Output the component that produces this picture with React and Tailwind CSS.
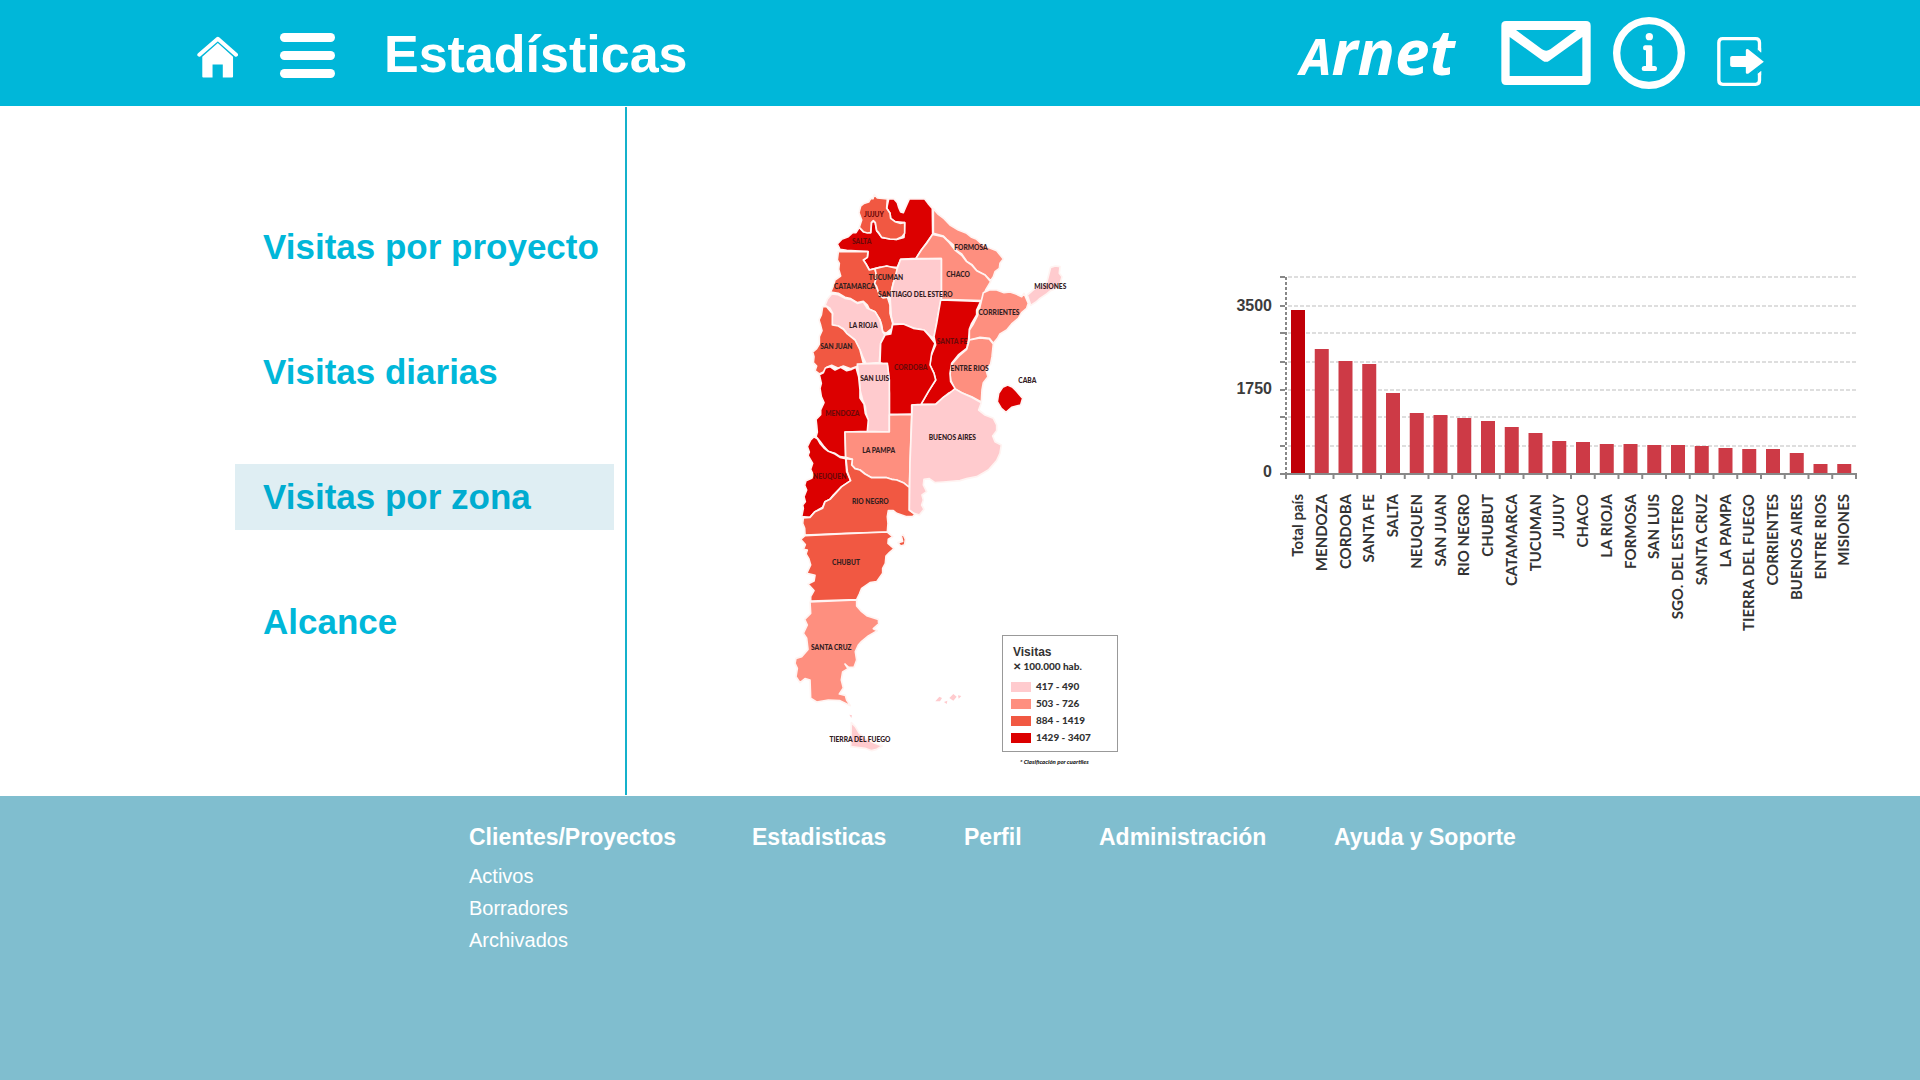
import React from "react";

const SHADES = {
  pale: "#ffcbce",
  salmon: "#fe8f7f",
  orange: "#f15842",
  red: "#dc0000",
};

const PROVINCES = [
  { name: "Salta", shade: "red", d: "M238 142L250 155 272 158 275 125 285 125 290 152 305 172 330 177 350 178 372 172 374 128 345 125 332 115 330 100 320 85 326 57 342 57 352 68 356 82 362 96 370 98 376 84 388 57 434 57 444 70 457 85 458 163 440 188 424 210 408 235 362 238 352 262 330 262 320 258 308 264 300 262 285 266 268 270 258 252 250 240 262 232 264 215 200 211 180 208 172 192 185 178 205 170 218 158 228 158Z" },
  { name: "Jujuy", shade: "orange", d: "M238 142L245 120 237 98 242 78 252 70 266 66 272 56 279 56 283 44 292 54 322 57 320 85 330 100 332 115 345 125 360 130 374 128 374 160 366 170 350 178 330 177 305 172 296 158 290 152 286 128 280 122 274 128 272 158 262 159 250 155Z" },
  { name: "Formosa", shade: "salmon", d: "M460 86L475 103 492 116 510 135 535 150 560 160 575 172 590 178 605 192 620 200 650 212 670 237 660 250 658 265 645 275 640 290 632 302 615 285 590 272 576 254 560 244 545 222 530 212 520 195 500 178 490 168 460 160Z" },
  { name: "Chaco", shade: "salmon", d: "M458 163L490 170 508 188 525 210 545 226 560 245 576 256 590 272 615 285 632 305 618 328 605 362 484 358 484 236 408 235 424 210 440 190Z" },
  { name: "Catamarca", shade: "orange", d: "M175 215L264 215 262 232 250 240 258 252 268 270 285 266 290 290 285 310 300 345 322 350 330 375 330 400 338 430 336 445 318 460 308 455 305 435 300 420 285 395 268 388 262 375 250 364 232 368 212 356 195 352 175 340 152 336 160 318 165 300 182 288 176 268 178 250 172 240Z" },
  { name: "Tucuman", shade: "orange", d: "M285 266L300 262 320 258 352 265 350 290 340 308 336 325 332 350 310 354 298 345 290 320 284 310 290 290Z" },
  { name: "Santiago del Estero", shade: "pale", d: "M362 238L484 236 484 358 475 400 462 474 450 468 432 450 400 444 370 432 340 432 334 410 332 380 330 350 340 310 352 265Z" },
  { name: "La Rioja", shade: "pale", d: "M155 342L175 344 195 355 212 358 232 370 250 366 262 385 285 395 300 420 308 455 315 465 302 490 298 548 258 551 248 530 240 510 225 480 200 460 190 446 175 438 157 435 156 415 158 400 150 385 135 376 142 358Z" },
  { name: "San Juan", shade: "orange", d: "M128 380L140 380 148 390 157 400 157 435 175 438 190 448 200 460 225 480 240 510 250 550 228 560 212 566 190 558 175 565 155 556 140 562 132 575 118 582 105 572 110 558 100 548 102 530 98 516 110 506 118 492 118 470 126 452 122 436 117 420 124 405Z" },
  { name: "Misiones", shade: "pale", d: "M812 262L826 258 840 260 838 280 846 290 842 306 830 325 812 332 800 342 780 355 768 366 752 376 742 345 765 325 782 318 800 308 806 285Z" },
  { name: "Corrientes", shade: "salmon", d: "M610 338L628 330 650 330 672 338 690 336 708 342 725 350 732 340 745 370 740 385 725 398 715 415 695 432 680 450 660 462 652 476 640 490 628 475 600 472 568 480 568 450 580 432 592 408 600 380Z" },
  { name: "Entre Rios", shade: "salmon", d: "M568 480L600 474 628 477 640 492 636 530 632 552 618 570 624 590 610 608 606 630 604 666 575 650 545 638 525 628 512 600 510 580 516 552 540 525 560 508Z" },
  { name: "Santa Fe", shade: "red", d: "M482 360L602 364 590 390 590 405 575 430 568 448 566 478 560 505 535 525 515 550 510 580 512 605 525 625 520 634 508 638 490 652 467 673 423 673 445 635 467 600 462 580 450 555 452 530 467 495 462 470 470 430 475 400Z" },
  { name: "Cordoba", shade: "red", d: "M338 434L370 432 400 445 432 450 450 470 465 490 455 520 450 555 462 580 467 600 445 635 423 673 395 675 395 703 328 703 328 640 325 580 322 556 300 548 302 490 315 465 332 462Z" },
  { name: "San Luis", shade: "pale", d: "M232 552L322 550 328 600 328 756 260 754 264 720 258 700 256 680 248 660 240 630 238 600Z" },
  { name: "Mendoza", shade: "red", d: "M118 584L130 578 136 564 150 560 165 570 182 562 200 572 215 568 228 562 236 590 240 630 240 654 252 672 256 700 265 720 262 754 195 756 197 832 180 830 165 820 145 815 132 800 120 784 108 770 112 756 110 735 108 718 122 704 122 690 132 668 124 650 120 625 124 610Z" },
  { name: "Neuquen", shade: "red", d: "M102 770L112 776 120 790 132 804 145 814 165 822 180 832 197 836 200 875 212 902 185 920 160 945 150 958 135 965 128 982 105 995 90 1012 65 1010 70 985 68 975 76 965 72 950 80 930 74 916 78 902 95 895 100 885 92 868 98 850 84 826 88 816 82 800 92 780Z" },
  { name: "La Pampa", shade: "salmon", d: "M195 756L328 756 328 705 395 703 388 922 370 908 350 900 335 898 320 893 275 893 255 882 240 870 225 866 215 855 217 838 197 832Z" },
  { name: "Rio Negro", shade: "orange", d: "M198 836L217 838 215 855 225 866 240 870 255 882 275 893 320 893 335 898 350 900 370 908 388 922 388 990 405 1003 398 1010 380 1010 350 1000 340 992 325 992 322 1010 324 1030 322 1056 200 1060 75 1065 74 1045 68 1030 70 1014 90 1012 105 995 128 985 135 965 150 958 185 920 212 902 202 875Z" },
  { name: "Chubut", shade: "orange", d: "M62 1078L75 1067 200 1061 322 1056 338 1070 325 1078 324 1090 342 1106 328 1118 318 1128 316 1150 308 1165 308 1180 290 1205 270 1208 245 1225 238 1242 230 1259 92 1263 92 1250 102 1232 84 1212 102 1203 105 1186 80 1180 92 1155 86 1135 78 1122 82 1110 70 1108 76 1094Z" },
  { name: "Península Valdés", shade: "orange", d: "M370 1064L376 1078 374 1094 362 1098 354 1088 368 1084 364 1068Z" },
  { name: "Santa Cruz", shade: "salmon", d: "M90 1266L230 1260 230 1278 245 1295 262 1308 295 1318 296 1332 280 1346 292 1352 265 1368 245 1384 235 1395 226 1415 230 1440 222 1462 206 1462 195 1452 204 1466 188 1476 184 1500 190 1524 178 1542 196 1546 200 1560 211 1577 180 1562 145 1560 110 1566 92 1555 90 1500 75 1496 60 1508 48 1490 52 1465 45 1450 48 1435 65 1430 84 1408 80 1375 70 1360 82 1335 74 1318 92 1300Z" },
  { name: "Tierra del Fuego", shade: "pale", d: "M214 1628L226 1640 238 1660 260 1678 285 1690 307 1698 290 1708 275 1712 255 1705 212 1700Z" },
  { name: "Buenos Aires", shade: "pale", d: "M397 675L467 673 490 652 508 640 525 626 545 638 575 652 604 668 596 690 615 705 640 715 650 735 650 752 638 768 645 785 664 795 660 820 650 842 625 870 590 890 560 896 540 902 490 906 465 908 448 896 432 898 430 915 440 935 426 945 430 960 425 975 432 988 418 1005 402 1000 388 990 390 850Z" },
  { name: "CABA", shade: "red", d: "M683 615L698 622 708 632 728 655 722 675 695 682 678 697 664 685 652 665 656 640 668 622Z" },
  { name: "Malvinas", shade: "pale", d: "M466 1564L478 1550 486 1554 480 1564ZM492 1566L502 1562 500 1572ZM508 1554L520 1542 530 1550 520 1562ZM534 1546L544 1548 536 1556ZM208 1604L216 1606 214 1614Z" },
];

const MAP_LABELS = [
  ["JUJUY", 282, 112, true],
  ["SALTA", 245, 193, true],
  ["FORMOSA", 573, 210],
  ["TUCUMAN", 318, 299],
  ["CHACO", 534, 292],
  ["CATAMARCA", 224, 327],
  ["SANTIAGO DEL ESTERO", 406, 350],
  ["MISIONES", 811, 327],
  ["CORRIENTES", 657, 404],
  ["LA RIOJA", 250, 445],
  ["SANTA FE", 516, 491, true],
  ["SAN JUAN", 169, 506],
  ["CORDOBA", 392, 569, true],
  ["ENTRE RIOS", 569, 573],
  ["SAN LUIS", 284, 602],
  ["CABA", 742, 609],
  ["MENDOZA", 187, 707, true],
  ["BUENOS AIRES", 517, 781],
  ["LA PAMPA", 296, 819],
  ["NEUQUEN", 149, 898, true],
  ["RIO NEGRO", 271, 971],
  ["CHUBUT", 198, 1156],
  ["SANTA CRUZ", 154, 1410],
  ["TIERRA DEL FUEGO", 240, 1687],
];

const LEGEND = [
  { range: "417 - 490", color: "bg-[#ffcbce]" },
  { range: "503 - 726", color: "bg-[#fe8f7f]" },
  { range: "884 - 1419", color: "bg-[#f15842]" },
  { range: "1429 - 3407", color: "bg-[#dc0000]" },
];

const BARS = [
  ["Total país", 163],
  ["MENDOZA", 124],
  ["CORDOBA", 112],
  ["SANTA FE", 109],
  ["SALTA", 80],
  ["NEUQUEN", 60],
  ["SAN JUAN", 58],
  ["RIO NEGRO", 55],
  ["CHUBUT", 52],
  ["CATAMARCA", 46],
  ["TUCUMAN", 40],
  ["JUJUY", 32],
  ["CHACO", 31],
  ["LA RIOJA", 29],
  ["FORMOSA", 29],
  ["SAN LUIS", 28],
  ["SGO. DEL ESTERO", 28],
  ["SANTA CRUZ", 27],
  ["LA PAMPA", 25],
  ["TIERRA DEL FUEGO", 24],
  ["CORRIENTES", 24],
  ["BUENOS AIRES", 20],
  ["ENTRE RIOS", 9],
  ["MISIONES", 9],
];

const GRID_LINES = [7, 36, 63, 92, 120, 147, 176];

const NAV = ["Visitas por proyecto", "Visitas diarias", "Visitas por zona", "Alcance"];

function HomeIcon() {
  return (
    <svg viewBox="50 106 124 126" className="h-[42px] w-[41px]" aria-hidden="true">
      <path d="M57 162L113 114 168 162" fill="none" stroke="#fff" strokeWidth="12" strokeLinecap="round" strokeLinejoin="round" />
      <path d="M66 168L113 127 159 168V228Q159 231 156 231H128V192H97V231H69Q66 231 66 228Z" fill="#fff" />
    </svg>
  );
}

function MenuIcon() {
  return (
    <span className="flex w-[55px] flex-col gap-[9px]">
      <span className="h-[9px] rounded-full bg-white" />
      <span className="h-[9px] rounded-full bg-white" />
      <span className="h-[9px] rounded-full bg-white" />
    </span>
  );
}

function MailIcon() {
  return (
    <svg viewBox="664 66 268 192" className="h-16 w-[90px]" aria-hidden="true">
      <path
        fill="#fff"
        fillRule="evenodd"
        d="M678 66H918Q932 66 932 80V244Q932 258 918 258H678Q664 258 664 244V80Q664 66 678 66ZM708 93L786 151Q798 159 811 151L889 93ZM689 114V231H907V114L808 185Q798 192 788 185Z"
      />
    </svg>
  );
}

function InfoIcon() {
  return (
    <svg viewBox="999 54 216 216" className="h-[72px] w-[72px]" aria-hidden="true">
      <circle cx="1107" cy="162" r="97" fill="none" stroke="#fff" strokeWidth="22" />
      <circle cx="1108" cy="113" r="11" fill="#fff" />
      <path fill="#fff" d="M1095 139H1112Q1117 139 1117 144V201H1124Q1131 201 1131 209T1124 216H1092Q1085 216 1085 209T1092 201H1098V154H1095Q1089 154 1089 147T1095 139Z" />
    </svg>
  );
}

function ExitIcon() {
  return (
    <svg viewBox="1311 111 140 147" className="h-[49px] w-[47px]" aria-hidden="true">
      <path fill="none" stroke="#fff" strokeWidth="10" d="M1438 157V128Q1438 116 1426 116H1328Q1316 116 1316 128V241Q1316 253 1328 253H1426Q1438 253 1438 241V213" />
      <path fill="#00b7d9" d="M1432 146L1451 163V207L1432 223Z" />
      <path fill="#fff" d="M1433 149L1443 158V145H1433ZM1433 221L1443 213V226H1433Z" />
      <path fill="#fff" d="M1356 168H1397V150Q1399 145 1404 148L1451 185 1404 221Q1399 223 1397 218V201H1356Q1350 201 1350 196V173Q1350 168 1356 168Z" />
    </svg>
  );
}

function Header() {
  return (
    <header className="flex h-[106px] items-center bg-[#00b7d9] pr-[156px] pl-[197px]">
      <a href="#inicio" aria-label="Inicio" className="pt-2">
        <HomeIcon />
      </a>
      <button type="button" aria-label="Menú" className="ml-[42px] pt-1">
        <MenuIcon />
      </button>
      <h1 className="ml-[49px] pt-0.5 text-[52px] leading-none font-bold text-white">Estadísticas</h1>
      <div className="ml-auto flex items-center self-stretch">
        <a href="#arnet" className="flex items-baseline pr-[46px] pb-1 font-['Open_Sans',sans-serif] font-bold text-white italic">
          <span className="text-[50px] leading-none">A</span>
          <span className="text-[62px] leading-none">rnet</span>
        </a>
        <button type="button" aria-label="Mensajes">
          <MailIcon />
        </button>
        <button type="button" aria-label="Información" className="ml-[22px]">
          <InfoIcon />
        </button>
        <button type="button" aria-label="Salir" className="mb-5 ml-8 self-end">
          <ExitIcon />
        </button>
      </div>
    </header>
  );
}

function ArgentinaMap() {
  return (
    <figure className="grid w-[340px] shrink-0 font-['Lato',sans-serif]">
      <svg viewBox="0 0 1020 1770" className="col-start-1 row-start-1 w-full" role="img" aria-label="Mapa de visitas por provincia">
        {PROVINCES.map((p) => (
          <path key={p.name} d={p.d} fill={SHADES[p.shade]} stroke={p.name === "Malvinas" ? "none" : "#fff4f2"} strokeWidth="5" strokeLinejoin="round" />
        ))}
        {MAP_LABELS.map(([name, x, y, dark]) => (
          <text key={name} x={x} y={y} textAnchor="middle" fontSize="20" fontWeight="900" fill={dark ? "#6b0808" : "#33201f"}>
            {name}
          </text>
        ))}
      </svg>
      <figcaption className="col-start-1 row-start-1 flex flex-col self-end justify-self-end pr-0.5">
        <div className="flex h-[117px] w-[116px] flex-col border border-[#999] pt-2 pl-2 text-[10px] font-black text-[#333]">
          <p className="pl-0.5 font-['Liberation_Sans',sans-serif] text-xs leading-4 font-bold">Visitas</p>
          <p className="pl-0.5 leading-3">✕ 100.000 hab.</p>
          <ul className="pt-1.5">
            {LEGEND.map((row) => (
              <li key={row.range} className="flex h-[17px] items-center gap-[5px]">
                <span className={`h-2.5 w-5 ${row.color}`} />
                {row.range}
              </li>
            ))}
          </ul>
        </div>
        <p className="h-[18px] pt-1 pl-[18px] text-[6px] leading-3 font-black text-[#222] italic">* Clasificación por cuartiles</p>
      </figcaption>
    </figure>
  );
}

function BarChart() {
  return (
    <svg viewBox="0 0 630 370" className="w-full" role="img" aria-label="Visitas por provincia">
      {GRID_LINES.map((y) => (
        <g key={y}>
          <line x1="58" x2="626" y1={y} y2={y} stroke="#dedede" strokeWidth="2" strokeDasharray="4 2" />
          <line x1="50" x2="55" y1={y} y2={y} stroke="#888" strokeWidth="2" />
        </g>
      ))}
      <line x1="56" x2="56" y1="7" y2="204" stroke="#888" strokeWidth="2" strokeDasharray="3 2" />
      <g fontSize="16" fontWeight="700" fill="#3c3c3c" textAnchor="end">
        <text x="42" y="41">3500</text>
        <text x="42" y="124">1750</text>
        <text x="42" y="207">0</text>
      </g>
      {BARS.map(([name, height], i) => {
        const left = 56 + (i * 570) / 24;
        return (
          <g key={name}>
            <rect x={left + 5} y={203 - height} width="14" height={height} fill={i === 0 ? "#c00008" : "#cd3a46"} />
            <line x1={left} x2={left} y1="203" y2="209" stroke="#888" strokeWidth="2" />
            <text
              transform={`translate(${left + 17} 224) rotate(-90)`}
              textAnchor="end"
              fontSize="15"
              fontWeight="700"
              fill="#333"
              className="font-['Lato',sans-serif]"
            >
              {name}
            </text>
          </g>
        );
      })}
      <path d="M50 204H626V209" fill="none" stroke="#888" strokeWidth="2" />
    </svg>
  );
}

function Footer() {
  return (
    <footer className="flex-1 bg-[#80becf] pt-7 pb-10 pl-[469px] text-white">
      <div className="grid grid-cols-[283px_212px_135px_235px_auto] text-[23px] leading-[26px] font-bold">
        <section>
          <h2>Clientes/Proyectos</h2>
          <ul className="pt-2.5 text-[20px] leading-8 font-normal">
            <li><a href="#activos">Activos</a></li>
            <li><a href="#borradores">Borradores</a></li>
            <li><a href="#archivados">Archivados</a></li>
          </ul>
        </section>
        <h2><a href="#estadisticas">Estadisticas</a></h2>
        <h2><a href="#perfil">Perfil</a></h2>
        <h2><a href="#administracion">Administración</a></h2>
        <h2><a href="#ayuda">Ayuda y Soporte</a></h2>
      </div>
    </footer>
  );
}

export default function App() {
  return (
    <div className="flex min-h-screen flex-col bg-white font-['Liberation_Sans',Arial,sans-serif]">
      <Header />
      <main className="flex">
        <nav className="flex w-[625px] shrink-0 flex-col gap-[59px] pt-[108px] pr-[11px] pl-[235px]">
          {NAV.map((item) => (
            <a
              key={item}
              href="#visitas"
              aria-current={item === "Visitas por zona" ? "page" : undefined}
              className="flex h-[66px] items-center pb-0.5 pl-7 text-[35px] leading-none font-bold whitespace-nowrap text-[#00b7d9] aria-[current=page]:bg-[#dfeef3] aria-[current=page]:text-[#00acd0]"
            >
              {item}
            </a>
          ))}
        </nav>
        <div className="my-px w-0.5 shrink-0 bg-[#14b1cb]" />
        <div className="flex flex-1 items-start gap-[110px] pt-[74px] pr-[60px] pb-[26px] pl-[153px]">
          <ArgentinaMap />
          <div className="flex-1 pt-[90px]">
            <BarChart />
          </div>
        </div>
      </main>
      <Footer />
    </div>
  );
}
